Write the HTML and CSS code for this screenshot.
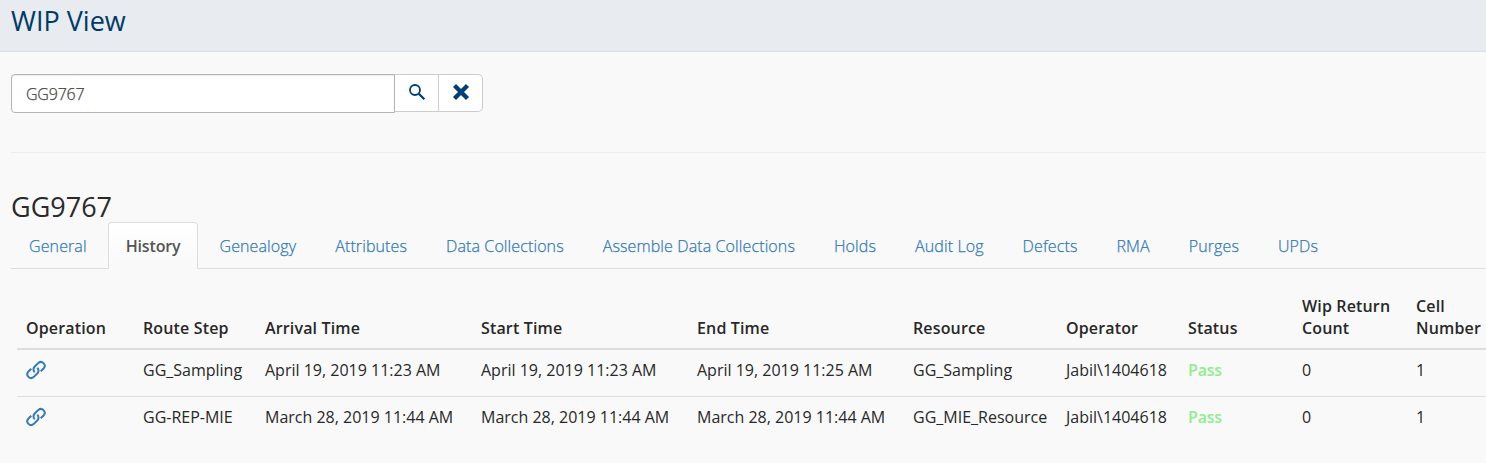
FILE: index.html
```html
<!DOCTYPE html>
<html lang="en">
<head>
<meta charset="utf-8">
<title>WIP View</title>
<link rel="stylesheet" href="styles.css">
</head>
<body>
<header class="page-header"><h1 class="page-title">WIP View</h1></header>
<main class="content">
<form class="search">
<input class="search-input" type="text" value="GG9767" aria-label="Serial number">
<button class="btn" type="button" aria-label="Search"><svg width="18" height="18" viewBox="0 0 18 18" fill="none" stroke="#003e73"><circle cx="7" cy="7" r="5" stroke-width="1.800"/><path d="M10.800 10.800L16.300 16.300" stroke-width="2.300"/></svg></button>
<button class="btn btn-last" type="button" aria-label="Clear"><svg width="18" height="18" viewBox="0 0 18 18" fill="none" stroke="#003e73" stroke-width="4.300"><path d="M2.500 2.500L15.500 15.500M15.500 2.500L2.500 15.500"/></svg></button>
</form>
<hr class="divider">
<h2 class="unit-title">GG9767</h2>
<nav class="tabs">
<a class="tab">General</a><a class="tab active">History</a><a class="tab">Genealogy</a><a class="tab">Attributes</a><a class="tab">Data Collections</a><a class="tab">Assemble Data Collections</a><a class="tab">Holds</a><a class="tab">Audit Log</a><a class="tab">Defects</a><a class="tab">RMA</a><a class="tab">Purges</a><a class="tab">UPDs</a>
</nav>
<table class="history">
<colgroup><col class="c-operation"><col class="c-route"><col class="c-time"><col class="c-time"><col class="c-time"><col class="c-resource"><col class="c-operator"><col class="c-status"><col class="c-count"><col class="c-cell"></colgroup>
<thead><tr><th>Operation</th><th>Route Step</th><th>Arrival Time</th><th>Start Time</th><th>End Time</th><th>Resource</th><th>Operator</th><th>Status</th><th>Wip Return<br>Count</th><th>Cell<br>Number</th></tr></thead>
<tbody>
<tr><td><svg class="link" width="20" height="20" viewBox="0 0 20 20"><path d="M8.700 12.200A3.800 3.800 0 0 1 8.500 6.800L12.400 2.900A3.800 3.800 0 0 1 17.800 8.200L14.700 11.200M11.300 7.800A3.800 3.800 0 0 1 11.500 13.200L7.600 17.100A3.800 3.800 0 0 1 2.200 11.800L5.300 8.800"/></svg></td><td>GG_Sampling</td><td>April 19, 2019 11:23 AM</td><td>April 19, 2019 11:23 AM</td><td>April 19, 2019 11:25 AM</td><td>GG_Sampling</td><td>Jabil\1404618</td><td class="pass">Pass</td><td>0</td><td>1</td></tr>
<tr><td><svg class="link" width="20" height="20" viewBox="0 0 20 20"><path d="M8.700 12.200A3.800 3.800 0 0 1 8.500 6.800L12.400 2.900A3.800 3.800 0 0 1 17.800 8.200L14.700 11.200M11.300 7.800A3.800 3.800 0 0 1 11.500 13.200L7.600 17.100A3.800 3.800 0 0 1 2.200 11.800L5.300 8.800"/></svg></td><td>GG-REP-MIE</td><td>March 28, 2019 11:44 AM</td><td>March 28, 2019 11:44 AM</td><td>March 28, 2019 11:44 AM</td><td>GG_MIE_Resource</td><td>Jabil\1404618</td><td class="pass">Pass</td><td>0</td><td>1</td></tr>
</tbody>
</table>
</main>
</body>
</html>
```
FILE: styles.css
```css
* { box-sizing: border-box; }
body { margin: 0; height: 463px; overflow: hidden; background: #f9f9f9; color: #282828; font: 16px/22px "Open Sans", sans-serif; }
.page-header { height: 52px; padding: 3px 11px; background: #e8ebf0; border-bottom: 1px solid #dadde3; }
.page-title { margin: 0; font-size: 27px; line-height: 36px; font-weight: 400; color: #003a66; }
.content { padding: 22px 0 0 11px; }
.search { display: flex; }
.search-input { width: 384px; height: 39px; padding: 1px 14px 0; border: 1px solid #b3b3b3; border-radius: 4px 0 0 4px; background: #fff; color: #444; font: 300 16px "Open Sans", sans-serif; letter-spacing: -.2px; -webkit-text-stroke: .25px #444; box-shadow: inset 0 1px 1px rgba(0,0,0,.08); }
.btn { display: flex; align-items: center; justify-content: center; width: 44px; height: 38px; padding: 0 0 2px; border: 1px solid #ccc; border-left: 0; background: #fff; }
.btn-last { border-radius: 0 5px 5px 0; }
.divider { height: 1px; margin: 39px 0 0; border: 0; background: #eee; }
.unit-title { margin: 36px 0 0; font-size: 27px; line-height: 36px; font-weight: 400; color: #2a2a2a; }
.tabs { display: flex; height: 47px; margin-top: -3px; border-bottom: 1px solid #ddd; white-space: nowrap; }
.tab { height: 47px; padding: 12px 17px 0; margin-right: 3px; border: 1px solid transparent; color: #337ab7; font-weight: 300; letter-spacing: .11px; -webkit-text-stroke: .25px #337ab7; }
.tab.active { background: linear-gradient(#fff, #f9f9f9); border-color: #ddd; border-bottom-color: #f9f9f9; border-radius: 4px 4px 0 0; color: #555; font-weight: 600; letter-spacing: -.15px; -webkit-text-stroke: 0; }
.history { width: 1490px; margin: 20px 0 0 6px; table-layout: fixed; border-collapse: collapse; font-weight: 400; }
.c-operation { width: 117px; }
.c-route { width: 122px; }
.c-time { width: 216px; }
.c-resource { width: 153px; }
.c-operator { width: 122px; }
.c-status { width: 114px; }
.c-count { width: 114px; }
.c-cell { width: 100px; }
th { height: 60px; padding: 0 9px 9px; text-align: left; vertical-align: bottom; border-bottom: 2px solid #ddd; font-weight: 600; letter-spacing: .15px; white-space: nowrap; }
td { height: 47px; padding: 0 9px 5px; border-bottom: 1px solid #ddd; white-space: nowrap; }
tr:last-child td { border-bottom: 0; }
.pass { color: #90ee90; font-weight: 600; letter-spacing: -.2px; }
.link { display: block; fill: none; stroke: #337ab7; stroke-width: 2; }
```
